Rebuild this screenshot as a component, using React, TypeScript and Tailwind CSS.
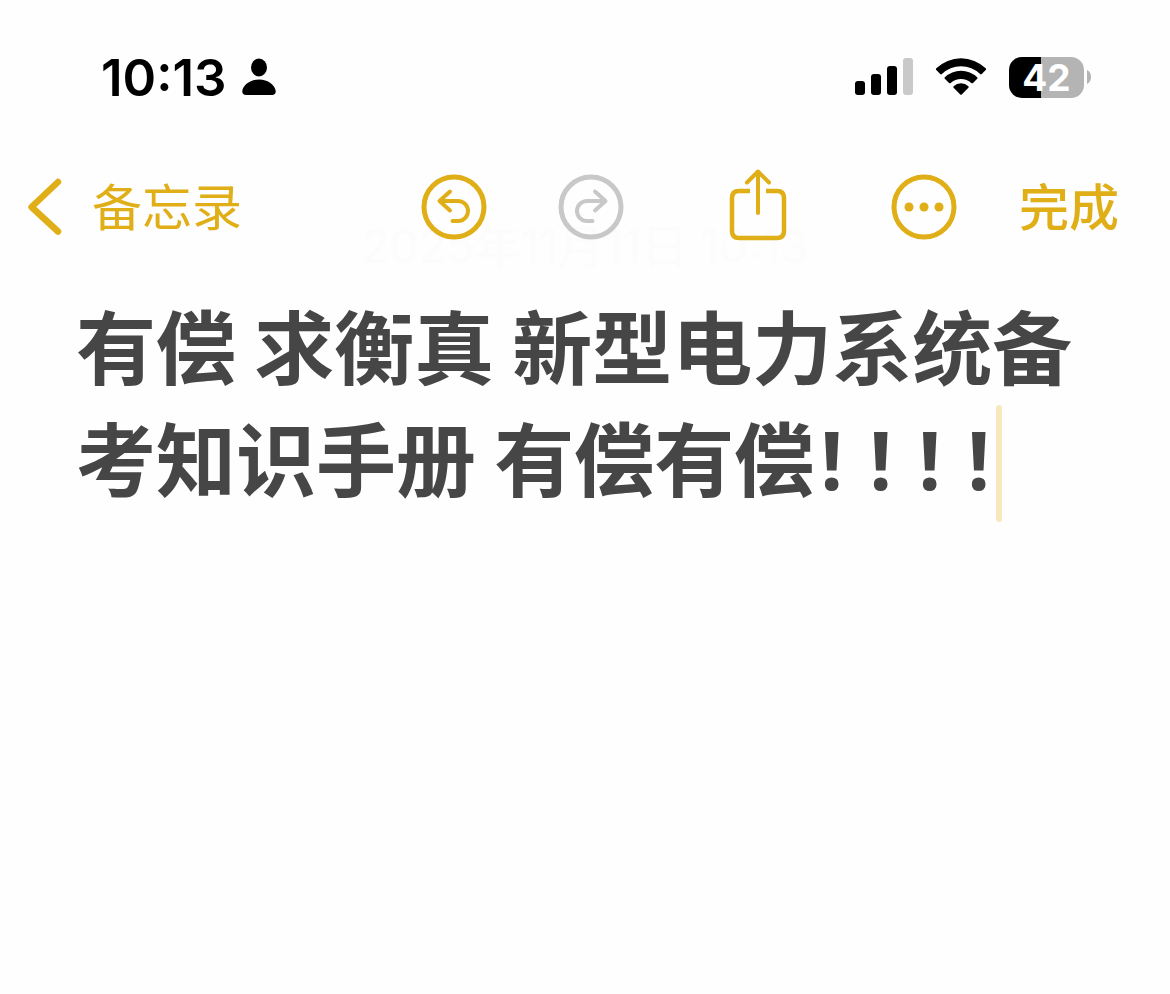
import React from "react";

function PersonIcon() {
  return (
    <svg viewBox="0 0 34 38" className="h-[38px] w-[34px]" fill="currentColor" aria-hidden="true">
      <ellipse cx="17" cy="9.5" rx="8" ry="9" />
      <path d="M4 37C1.500 37 0 35.500 0.300 33C1 27 8 21.500 17 21.500S33 27 33.700 33C34 35.500 32.500 37 30 37Z" />
    </svg>
  );
}

function SignalIcon() {
  return (
    <svg viewBox="0 0 58 38" className="h-[38px] w-[58px]" aria-hidden="true">
      <rect x="0" y="23" width="10" height="14" rx="3" />
      <rect x="16" y="16" width="10" height="21" rx="3" />
      <rect x="32" y="8" width="10" height="29" rx="3" />
      <rect x="48" y="0" width="10" height="37" rx="3" fill="#c9c9c9" />
    </svg>
  );
}

function WifiIcon() {
  return (
    <svg viewBox="0 0 52 38" className="h-[38px] w-[52px]" aria-hidden="true">
      <path d="M1.300 10.300Q0.500 11.200 1.300 12L5.200 16Q6 16.800 6.900 16A27.500 27.500 0 0 1 45.100 16Q46 16.800 46.800 16L50.700 12Q51.500 11.200 50.700 10.300A35.500 35.500 0 0 0 1.300 10.300Z" />
      <path d="M9.800 19.200Q9 20 9.800 20.800L14 25Q14.800 25.700 15.700 25A15.500 15.500 0 0 1 36.300 25Q37.200 25.700 38 25L42.200 20.800Q43 20 42.200 19.200A23.500 23.500 0 0 0 9.800 19.200Z" />
      <path d="M18.600 28.200Q17.900 29 18.600 29.700L25 36.200Q26 37.200 27 36.200L33.400 29.700Q34.100 29 33.400 28.200A11 11 0 0 0 18.600 28.200Z" />
    </svg>
  );
}

function Battery() {
  return (
    <div className="flex items-center gap-[3px]" aria-label="42%">
      <div className="flex h-[41px] w-[75px] items-center justify-center rounded-[13px] bg-linear-to-r from-black from-[43%] to-[#b4b4b4] to-[43%] font-['Inter',sans-serif] text-[37px] leading-none font-bold text-white">
        42
      </div>
      <svg viewBox="0 0 4 14" className="h-[14px] w-[4px]" fill="#b4b4b4" aria-hidden="true">
        <path d="M0 0Q4 2 4 7T0 14Z" />
      </svg>
    </div>
  );
}

function UndoIcon() {
  return (
    <svg viewBox="0 0 66 66" className="size-[66px]" fill="none" stroke="currentColor" strokeLinecap="round" strokeLinejoin="round" aria-hidden="true">
      <circle cx="33" cy="33" r="30" strokeWidth="5" />
      <path d="M29 17.500L18.500 27L29 36.500M19 27H37A10 10 0 0 1 37 47H31.500" strokeWidth="4" />
    </svg>
  );
}

function RedoIcon() {
  return (
    <svg viewBox="0 0 66 66" className="size-[66px]" fill="none" stroke="currentColor" strokeLinecap="round" strokeLinejoin="round" aria-hidden="true">
      <circle cx="33" cy="33" r="30" strokeWidth="5" />
      <path d="M37 17.500L47.500 27L37 36.500M47 27H29A10 10 0 0 0 29 47H34.500" strokeWidth="4" />
    </svg>
  );
}

function ShareIcon() {
  return (
    <svg viewBox="0 0 66 84" className="h-[84px] w-[66px]" fill="none" stroke="currentColor" strokeWidth="4" aria-hidden="true">
      <path d="M25 26H14Q7 26 7 33V66Q7 73 14 73H52Q59 73 59 66V33Q59 26 52 26H41" strokeWidth="4.500" />
      <path d="M33 48V6.500M22 17.500L33 6.500L44 17.500" strokeLinecap="round" strokeLinejoin="round" />
    </svg>
  );
}

function MoreIcon() {
  return (
    <svg viewBox="0 0 66 66" className="size-[66px]" aria-hidden="true">
      <circle cx="33" cy="33" r="30" fill="none" stroke="currentColor" strokeWidth="5" />
      <g fill="currentColor">
        <circle cx="18" cy="33" r="4.500" />
        <circle cx="33" cy="33" r="4.500" />
        <circle cx="48" cy="33" r="4.500" />
      </g>
    </svg>
  );
}

function StatusBar() {
  return (
    <div className="flex items-center justify-between pt-[51px] pr-[79px] pl-[101px] text-black">
      <div className="flex h-[52px] items-center gap-4">
        <time className="font-['Inter',sans-serif] text-[51px] leading-none font-semibold">10:13</time>
        <PersonIcon />
      </div>
      <div className="flex items-center gap-[22px]">
        <SignalIcon />
        <WifiIcon />
        <Battery />
      </div>
    </div>
  );
}

function Toolbar() {
  return (
    <nav className="mt-[65px] flex h-[78px] items-center pr-[51px] pl-[27px] text-[50px] leading-none text-[#e0ae16]">
      <a href="#notes" className="flex items-center gap-[30px]">
        <svg viewBox="0 0 35 58" className="h-[58px] w-[35px]" fill="none" stroke="currentColor" strokeWidth="6.500" strokeLinecap="round" strokeLinejoin="round" aria-hidden="true">
          <path d="M31 4L4.500 29L31 53.500" />
        </svg>
        <span className="pb-1.5">备忘录</span>
      </a>
      <button type="button" aria-label="撤销" className="ml-auto">
        <UndoIcon />
      </button>
      <button type="button" aria-label="重做" className="ml-[71px] text-[#c8c8c8]">
        <RedoIcon />
      </button>
      <button type="button" aria-label="共享" className="ml-[101px]">
        <ShareIcon />
      </button>
      <button type="button" aria-label="更多" className="ml-[100px]">
        <MoreIcon />
      </button>
      <button type="button" className="ml-[62px] pb-1.5 font-medium">完成</button>
    </nav>
  );
}

export default function App() {
  return (
    <div className="min-h-screen bg-[#fefefe] font-['Noto_Sans_CJK_SC',sans-serif]">
      <header className="relative z-10">
        <StatusBar />
        <Toolbar />
      </header>
      <main className="pr-6 pl-[76px]">
        <p className="-mt-6 pr-[52px] text-center font-['Inter','Noto_Sans_CJK_SC',sans-serif] text-[46px] leading-[48px] text-[#fcfcfc]">
          2025年11月11日 10:13
        </p>
        <h1
          role="textbox"
          contentEditable
          suppressContentEditableWarning
          className="mt-[17px] text-[80px] leading-[112px] font-bold text-[#464646] outline-none"
        >
          <span>有偿 求衡真 新型电力系统备</span>
          <span>考知识手册 有偿有偿</span>
          <span className="relative inline-flex font-['Open_Sans',sans-serif]">
            {[0, 1, 2, 3].map((i) => (
              <span key={i} className="w-[49px] pl-[6px]">!</span>
            ))}
            <span className="absolute top-0.5 right-2 h-[117px] w-[6px] rounded-full bg-[#f7e9bd]" />
          </span>
        </h1>
      </main>
    </div>
  );
}
